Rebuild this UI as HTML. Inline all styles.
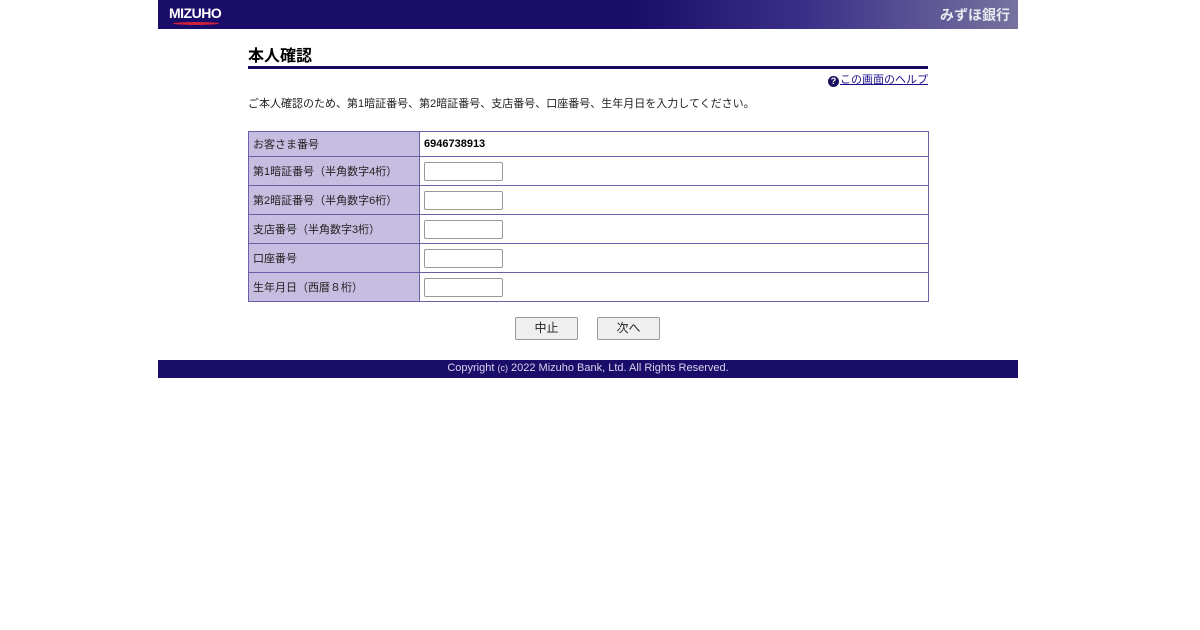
<!DOCTYPE html>
<html><head><meta charset="utf-8"><style>
body{margin:0;background:#fff;font-family:"Liberation Sans","Noto Sans CJK JP",sans-serif;}
.hd{position:absolute;left:158px;top:0;width:860px;height:29px;background:linear-gradient(90deg,#1a0d6a 0%,#1a0d6a 55%,#3a2f88 75%,#77729f 100%);}
.logo{position:absolute;left:11px;top:5px;color:#fff;font-weight:bold;font-size:14px;letter-spacing:-0.5px;}
.logo:after{content:"";position:absolute;left:4px;top:17px;width:46px;height:3px;border-radius:50%;background:#d0203a;}
.bank{position:absolute;right:8px;top:5px;color:#e8e8f0;font-size:14px;font-weight:bold;}
h1{position:absolute;left:248px;top:47px;margin:0;width:680px;font-size:16px;font-weight:bold;border-bottom:3px solid #140a5e;padding-bottom:0;line-height:19px;}
.help{position:absolute;left:828px;top:71px;font-size:11px;color:#1a0d8a;text-decoration:underline;}
.help b{display:inline-block;width:11px;height:11px;border-radius:50%;background:#1a1060;color:#fff;font-size:9px;text-align:center;line-height:11px;vertical-align:-1px;text-decoration:none;margin-right:1px;}
.msg{position:absolute;left:248px;top:95px;font-size:11px;color:#222;}
table{position:absolute;left:248px;top:131px;width:681px;border-collapse:collapse;font-size:11px;}
td{border:1px solid #6a60a8;height:28px;padding:0 4px;}
tr:first-child td{height:24px;}
td.l{background:#c6bde0;width:162px;color:#222;}
td.v{background:#fff;}
input{width:77px;height:17px;border:1px solid #999;border-radius:2px;margin:0;padding:0;display:block;}
.btn{position:absolute;top:317px;width:61px;height:21px;border:1px solid #999;background:#efefef;border-radius:2px;font-size:12px;text-align:center;line-height:21px;color:#222;}
.ft{position:absolute;left:158px;top:360px;width:860px;height:18px;background:#1a0d6a;color:#d8d4ee;font-size:11px;text-align:center;line-height:17px;}
</style></head><body>
<div class="hd"><div class="logo">MIZUHO</div><div class="bank">みずほ銀行</div></div>
<h1>本人確認</h1>
<div class="help"><b>?</b>この画面のヘルプ</div>
<div class="msg">ご本人確認のため、第1暗証番号、第2暗証番号、支店番号、口座番号、生年月日を入力してください。</div>
<table>
<tr><td class="l">お客さま番号</td><td class="v"><b>6946738913</b></td></tr>
<tr><td class="l">第1暗証番号（半角数字4桁）</td><td class="v"><input></td></tr>
<tr><td class="l">第2暗証番号（半角数字6桁）</td><td class="v"><input></td></tr>
<tr><td class="l">支店番号（半角数字3桁）</td><td class="v"><input></td></tr>
<tr><td class="l">口座番号</td><td class="v"><input></td></tr>
<tr><td class="l">生年月日（西暦８桁）</td><td class="v"><input></td></tr>
</table>
<div class="btn" style="left:515px">中止</div>
<div class="btn" style="left:597px">次へ</div>
<div class="ft">Copyright <span style="font-size:9px">(c)</span> 2022 Mizuho Bank, Ltd. All Rights Reserved.</div>
</body></html>
